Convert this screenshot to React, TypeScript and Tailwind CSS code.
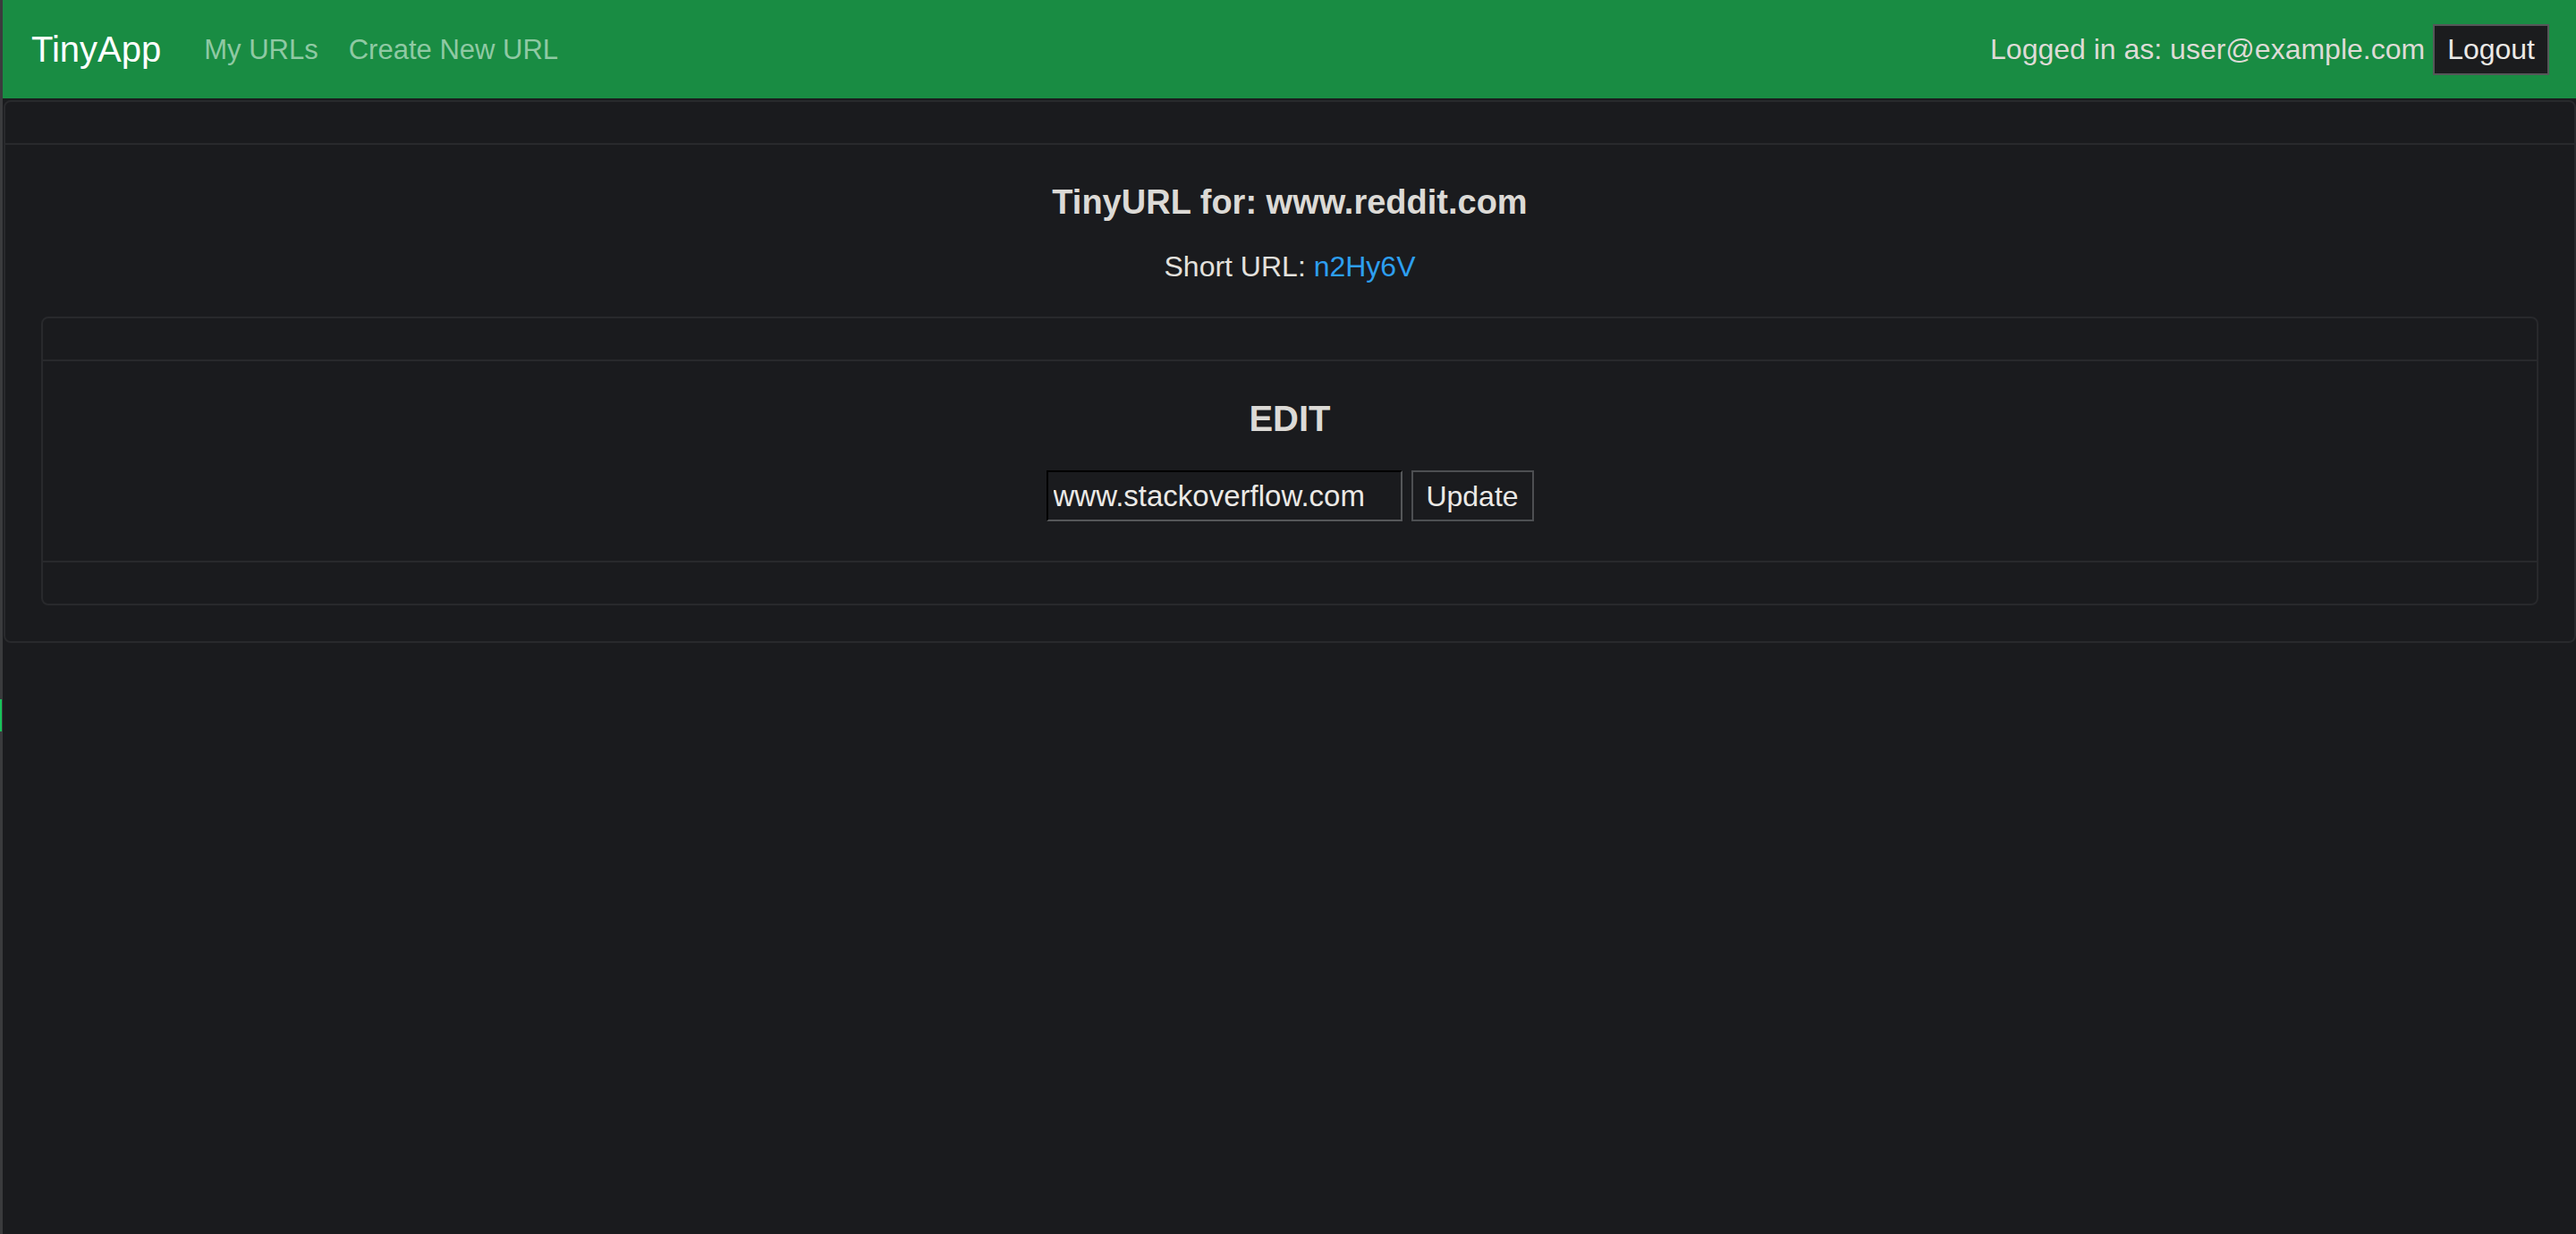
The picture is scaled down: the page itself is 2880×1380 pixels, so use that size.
import React from 'react';

const font = { fontFamily: '"Liberation Sans", Arial, sans-serif' };

function Navbar() {
    return (
        <nav className="h-[110px] bg-[#198c43] flex items-center justify-between pl-[32px] pr-[30px]">
            <div className="flex items-center">
                <a className="text-[40px] text-white mr-[48px] leading-none">TinyApp</a>
                <a className="text-[31px] text-[#8fc9a3] mr-[34px] leading-none">My URLs</a>
                <a className="text-[31px] text-[#8fc9a3] leading-none">Create New URL</a>
            </div>
            <div className="flex items-center gap-[9px]">
                <span className="text-[32px] text-[#dedbd6] leading-none">Logged in as: user@example.com</span>
                <button className="h-[57px] px-[14px] bg-[#1b1c1e] border-2 border-[#555759] text-[32px] text-[#ebe9e6] leading-none">
                    Logout
                </button>
            </div>
        </nav>
    );
}

export default function App() {
    return (
        <div className="min-h-screen bg-[#1a1b1e] flex" style={font}>
            {/* window edge strip */}
            <div className="w-[3px] bg-[#3a3b3d] flex flex-col shrink-0">
                <div className="h-[782px]" />
                <div className="h-[36px] w-[2px] bg-[#17c45a]" />
            </div>

            <div className="flex-1 min-w-0">
                <Navbar />

                <div className="mt-[2px] ml-[1px] border-2 border-[#28292c] rounded-[8px]">
                    <div className="h-[48px] border-b-2 border-[#28292c]" />
                    <div className="p-[40px] text-center">
                        <h5 className="text-[38px] leading-[48px] font-bold text-[#dcdad6]">
                            TinyURL for: www.reddit.com
                        </h5>
                        <p className="mt-[24px] mb-[32px] text-[32px] leading-[48px] text-[#e3e1dd]">
                            Short URL: <a className="text-[#2d9ff0]">n2Hy6V</a>
                        </p>

                        <div className="border-2 border-[#28292c] rounded-[8px]">
                            <div className="h-[48px] border-b-2 border-[#28292c]" />
                            <div className="px-[40px] pt-[40px] pb-[44px]">
                                <h5 className="text-[40px] leading-[48px] font-bold text-[#dcdad6]">EDIT</h5>
                                <form className="mt-[34px] flex justify-center items-center gap-[10px]">
                                    <input
                                        type="text"
                                        defaultValue="www.stackoverflow.com"
                                        className="w-[398px] h-[57px] bg-[#1a1b1e] text-[33px] text-[#ebe9e6] pl-[6px] border-2 border-t-black border-l-black border-b-[#555759] border-r-[#555759] outline-none"
                                        style={font}
                                    />
                                    <button
                                        type="button"
                                        className="w-[137px] h-[57px] bg-[#1a1b1e] border-2 border-[#4d4f52] text-[32px] text-[#ebe9e6] leading-none"
                                    >
                                        Update
                                    </button>
                                </form>
                            </div>
                            <div className="h-[48px] border-t-2 border-[#28292c]" />
                        </div>
                    </div>
                </div>
            </div>
        </div>
    );
}
